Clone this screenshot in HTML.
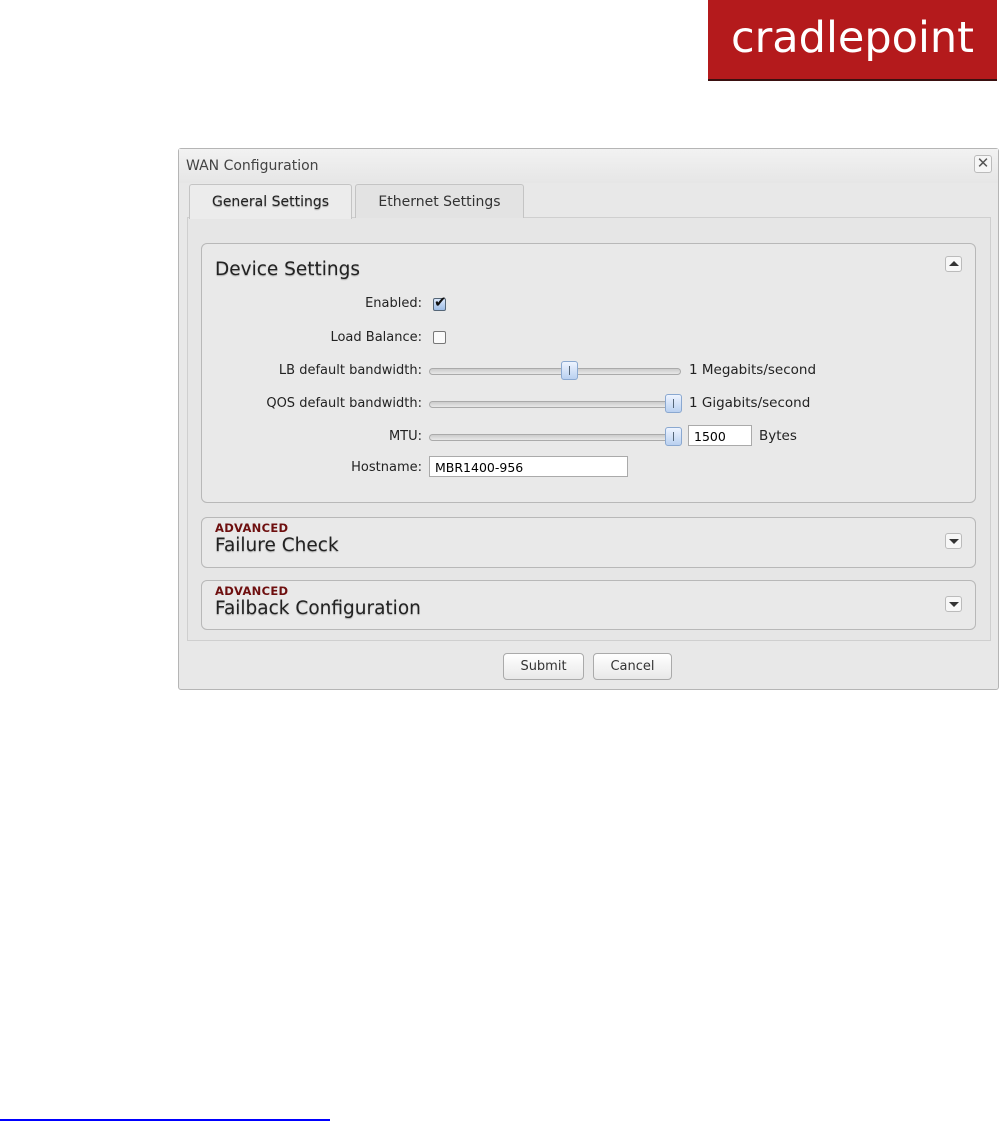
<!DOCTYPE html>
<html><head><style>
*{box-sizing:border-box;margin:0;padding:0}
body{width:999px;height:1122px;background:#fff;position:relative;font-family:"DejaVu Sans",sans-serif;overflow:hidden}
.abs{position:absolute}
.logo{left:708px;top:0;width:289px;height:81px;background:#b41a1c;border-bottom:2px solid #3a1010;color:#fff;font-size:43px;text-align:center;line-height:76px;letter-spacing:0;font-family:"DejaVu Sans",sans-serif;font-weight:normal}
.dlg{left:178px;top:148px;width:821px;height:542px;border:1px solid #b5b5b5;border-radius:3px;background:#e8e8e8}
.title{left:0;top:0;width:100%;height:34px;background:linear-gradient(#f2f2f2,#e6e6e6);font-size:14px;color:#444;padding:9px 0 0 7px}
.close{left:795px;top:6px;width:18px;height:18px;border:1px solid #bbb;border-radius:3px;background:#f6f6f6;font-size:15px;line-height:15px;text-align:center;color:#555}
.tab{top:35px;height:34px;border:1px solid #c4c4c4;border-bottom:none;border-radius:3px 3px 0 0;font-size:14px;padding:9px 0 0 0;text-align:center}
.panel{left:8px;top:68px;width:804px;height:424px;border:1px solid #cfcfcf;background:#e6e6e6}
.box{left:22px;width:775px;border:1px solid #b8b8b8;border-radius:6px;background:#e9e9e9}
.h{font-size:18.5px;color:#222;text-shadow:0 1px 1px #aaa}
.adv{font-size:11.5px;font-weight:bold;color:#6e0f0f;letter-spacing:.3px}
.tg{width:17px;height:16px;border:1px solid #bbb;border-radius:3px;background:#f7f7f7}
.lbl{font-size:13px;color:#222;text-align:right;width:240px;left:4px}
.track{left:251px;width:252px;height:7px;border:1px solid #aaa;border-radius:4px;background:linear-gradient(#ccc,#e8e8e8)}
.thumb{width:17px;height:19px;border:1px solid #8aa8d0;border-radius:3px;background:linear-gradient(#eef4ff,#b9d0f0)}
.thumb:after{content:"";position:absolute;left:7px;top:4px;width:1px;height:9px;background:#567}
.val{font-size:13.5px;color:#222}
.inp{height:21px;border:1px solid #aaa;background:#fff;font-size:12.5px;padding:3px 5px}
.btn{top:504px;height:27px;border:1px solid #aaa;border-radius:4px;background:linear-gradient(#fff,#e8e8e8);font-size:13px;text-align:center;line-height:25px;color:#333}
</style></head><body>
<div class="abs logo">cradlepoint</div>
<div class="abs dlg">
 <div class="abs title">WAN Configuration</div>
 <div class="abs close">✕</div>
 <div class="abs panel"></div>
 <div class="abs tab" style="left:10px;width:163px;background:#ececec;height:35px;color:#222;text-shadow:0 1px 1px #999">General Settings</div>
 <div class="abs tab" style="left:176px;width:169px;background:#e3e3e3;color:#333">Ethernet Settings</div>
 <div class="abs box" style="top:94px;height:260px">
  <div class="abs h" style="left:13px;top:15px">Device Settings</div>
  <div class="abs tg" style="left:743px;top:12px"><div style="margin:4px auto 0;width:0;height:0;border-left:5px solid transparent;border-right:5px solid transparent;border-bottom:5px solid #333"></div></div>
  <div class="abs lbl" style="top:52px;left:-20px">Enabled:</div>
  <div class="abs" style="left:231px;top:54px;width:13px;height:13px;border:1px solid #567;background:linear-gradient(#dbe8fb,#9ebde6);border-radius:2px"><span style="position:absolute;left:0;top:-6px;font-size:15px;color:#111">✔</span></div>
  <div class="abs lbl" style="top:86px;left:-20px">Load Balance:</div>
  <div class="abs" style="left:231px;top:87px;width:13px;height:13px;border:1px solid #777;background:#fafafa;border-radius:2px"></div>
  <div class="abs lbl" style="top:119px;left:-20px">LB default bandwidth:</div>
  <div class="abs track" style="left:227px;top:124px"></div>
  <div class="abs thumb" style="left:359px;top:117px"></div>
  <div class="abs val" style="left:487px;top:118px">1 Megabits/second</div>
  <div class="abs lbl" style="top:152px;left:-20px">QOS default bandwidth:</div>
  <div class="abs track" style="left:227px;top:157px"></div>
  <div class="abs thumb" style="left:463px;top:150px"></div>
  <div class="abs val" style="left:487px;top:151px">1 Gigabits/second</div>
  <div class="abs lbl" style="top:185px;left:-20px">MTU:</div>
  <div class="abs track" style="left:227px;top:190px"></div>
  <div class="abs thumb" style="left:463px;top:183px"></div>
  <div class="abs inp" style="left:486px;top:181px;width:64px">1500</div>
  <div class="abs val" style="left:557px;top:184px">Bytes</div>
  <div class="abs lbl" style="top:216px;left:-20px">Hostname:</div>
  <div class="abs inp" style="left:227px;top:212px;width:199px">MBR1400-956</div>
 </div>
 <div class="abs box" style="top:368px;height:51px">
  <div class="abs adv" style="left:13px;top:3px">ADVANCED</div>
  <div class="abs h" style="left:13px;top:17px">Failure Check</div>
  <div class="abs tg" style="left:743px;top:15px"><div style="margin:5px auto 0;width:0;height:0;border-left:5px solid transparent;border-right:5px solid transparent;border-top:5px solid #333"></div></div>
 </div>
 <div class="abs box" style="top:431px;height:50px">
  <div class="abs adv" style="left:13px;top:3px">ADVANCED</div>
  <div class="abs h" style="left:13px;top:17px">Failback Configuration</div>
  <div class="abs tg" style="left:743px;top:15px"><div style="margin:5px auto 0;width:0;height:0;border-left:5px solid transparent;border-right:5px solid transparent;border-top:5px solid #333"></div></div>
 </div>
 <div class="abs btn" style="left:324px;width:81px">Submit</div>
 <div class="abs btn" style="left:414px;width:79px">Cancel</div>
</div>
<div class="abs" style="left:0;top:1119px;width:330px;height:2px;background:#00f"></div>
</body></html>
